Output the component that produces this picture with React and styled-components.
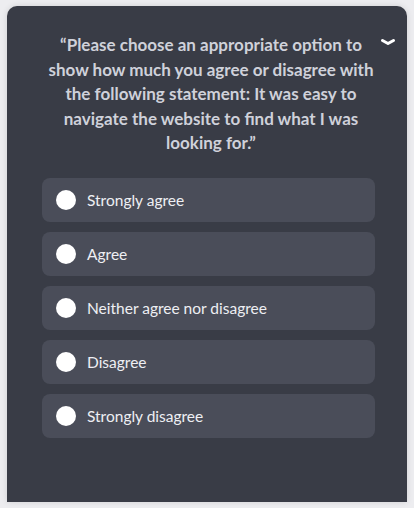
import React from 'react'
import styled, { createGlobalStyle } from 'styled-components'

const Global = createGlobalStyle`
  html, body {
    margin: 0;
    background: #ededf0;
    font-family: "Lato", "Liberation Sans", sans-serif;
  }
`;

const Page = styled.div`
  padding: 6px 7px 0 7px;
  height: 508px;
  box-sizing: border-box;
  overflow: hidden;
`;

const Card = styled.div`
  position: relative;
  background: #393c46;
  border-radius: 10px 10px 0 0;
  height: 496px;
  box-shadow: 0 0 6px rgba(0, 0, 0, 0.12);
  padding: 27px 32px 0 35px;
  box-sizing: border-box;
`;

const Toggle = styled.button`
  position: absolute;
  top: 32px;
  right: 11px;
  background: none;
  border: none;
  padding: 0;
  display: flex;
  cursor: pointer;
`;

const Question = styled.h2`
  margin: 0 0 22px 0;
  padding: 0 0 0 5px;
  text-align: center;
  font-size: 17px;
  line-height: 24.5px;
  font-weight: 700;
  color: #cfd1da;
`;

const Options = styled.div`
  display: flex;
  flex-direction: column;
  gap: 10px;
`;

const Option = styled.label`
  display: flex;
  align-items: center;
  gap: 11px;
  height: 44px;
  padding: 0 14px;
  background: #4a4d59;
  border-radius: 8px;
  cursor: pointer;
  font-size: 15.5px;
  color: #eeeff3;
`;

const Radio = styled.span`
  width: 20px;
  height: 20px;
  border-radius: 50%;
  background: ${props => (props.checked ? '#5b8def' : '#ffffff')};
  flex-shrink: 0;
`;

const choices = [
  'Strongly agree',
  'Agree',
  'Neither agree nor disagree',
  'Disagree',
  'Strongly disagree',
];

export default function App() {
  return (
    <Page>
      <Global />
      <Card>
        <Toggle aria-label="collapse">
          <svg width="16" height="9" viewBox="0 0 16 9">
            <path d="M2.5 2.5 L8 5.5 L13.5 2.5" fill="none" stroke="#ffffff" strokeWidth="3" strokeLinecap="round" strokeLinejoin="round" />
          </svg>
        </Toggle>
        <Question>
          “Please choose an appropriate option to show how much you agree or disagree with the following statement: It was easy to navigate the website to find what I was looking for.”
        </Question>
        <Options>
          {choices.map(c => (
            <Option key={c}>
              <Radio />
              {c}
            </Option>
          ))}
        </Options>
      </Card>
    </Page>
  )
}
